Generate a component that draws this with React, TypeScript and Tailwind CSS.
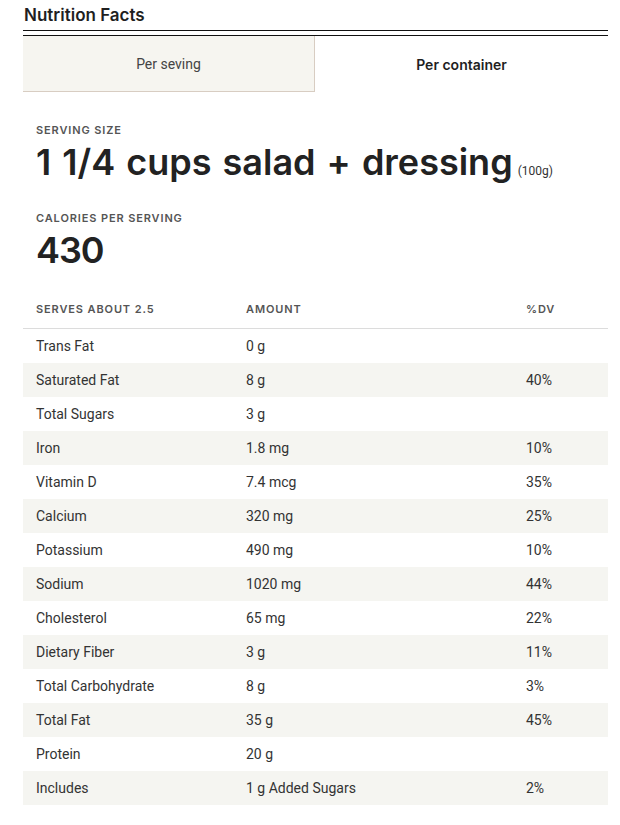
const rows: [string, string, string][] = [
  ["Trans Fat", "0 g", ""],
  ["Saturated Fat", "8 g", "40%"],
  ["Total Sugars", "3 g", ""],
  ["Iron", "1.8 mg", "10%"],
  ["Vitamin D", "7.4 mcg", "35%"],
  ["Calcium", "320 mg", "25%"],
  ["Potassium", "490 mg", "10%"],
  ["Sodium", "1020 mg", "44%"],
  ["Cholesterol", "65 mg", "22%"],
  ["Dietary Fiber", "3 g", "11%"],
  ["Total Carbohydrate", "8 g", "3%"],
  ["Total Fat", "35 g", "45%"],
  ["Protein", "20 g", ""],
  ["Includes", "1 g Added Sugars", "2%"],
];

export default function App() {
  return (
    <div className="w-[620px] min-h-[825px] bg-white text-[#222] font-['Inter',sans-serif]">
      <div className="ml-[23px] w-[585px]">
        {/* Title */}
        <h1 className="pt-[4px] pl-[1px] text-[17px] leading-[22px] font-semibold text-[#1f1f1f]">
          Nutrition Facts
        </h1>
        <div className="mt-[4px] border-t border-[#111]" />
        <div className="mt-[4px] border-t border-[#111]" />

        {/* Tabs */}
        <div className="flex h-[56px] font-['Roboto',sans-serif] text-[14px]">
          <button className="w-[292px] pt-[2px] bg-[#f6f5f0] border-r border-b border-[#d8cdc2] text-[#444]">
            Per seving
          </button>
          <button className="flex-1 font-semibold text-[#1f1f1f] font-['Inter',sans-serif] text-[14px]">
            Per container
          </button>
        </div>

        {/* Serving info */}
        <div className="pl-[13px] pt-[30px]">
          <p className="text-[11px] leading-[16px] font-semibold tracking-[0.08em] text-[#555]">SERVING SIZE</p>
          <p className="mt-[4px] h-[40px] flex items-baseline text-[#222] [word-spacing:2px]">
            <span className="text-[36px] leading-[40px] font-semibold">1 1/4 cups salad + dressing</span>
            <span className="ml-[5px] text-[12px] leading-[16px] font-['Roboto',sans-serif] text-[#333] [word-spacing:0]">(100g)</span>
          </p>
          <p className="mt-[28px] text-[11px] leading-[16px] font-semibold tracking-[0.08em] text-[#555]">
            CALORIES PER SERVING
          </p>
          <p className="mt-[4px] text-[36px] leading-[40px] font-semibold tracking-[-0.03em] text-[#222]">430</p>
        </div>

        {/* Table */}
        <div className="mt-[20px]">
          <div className="grid grid-cols-[210px_280px_1fr] pl-[13px] h-[39px] items-center border-b border-[#dcdcdc] text-[11px] font-semibold tracking-[0.08em] text-[#555]">
            <span>SERVES ABOUT 2.5</span>
            <span>AMOUNT</span>
            <span>%DV</span>
          </div>
          {rows.map(([name, amount, dv], i) => (
            <div
              key={name}
              className={`grid grid-cols-[210px_280px_1fr] pl-[13px] h-[34px] items-center font-['Roboto',sans-serif] text-[14px] text-[#333] ${
                i % 2 === 1 ? "bg-[#f5f5f1]" : ""
              }`}
            >
              <span>{name}</span>
              <span>{amount}</span>
              <span>{dv}</span>
            </div>
          ))}
        </div>
      </div>
    </div>
  );
}
